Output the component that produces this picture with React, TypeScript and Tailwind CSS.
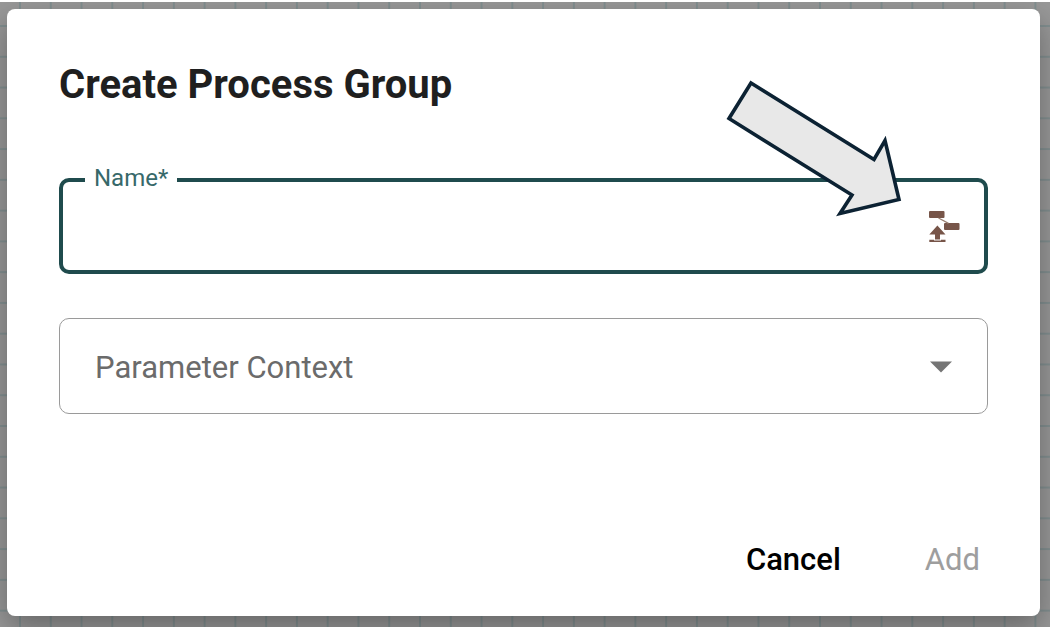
import { useState } from 'react';

function CanvasGrid() {
  return (
    <svg className="absolute inset-0 h-full w-full" aria-hidden="true">
      <defs>
        <pattern id="grid" x="19" y="23" width="30.77" height="30.77" patternUnits="userSpaceOnUse">
          <path d="M0 1H30.77M1 0V30.77" stroke="#828f90" strokeWidth="2" />
        </pattern>
      </defs>
      <rect width="100%" height="100%" fill="url(#grid)" />
    </svg>
  );
}

function ImportFlowIcon() {
  return (
    <svg className="size-8" viewBox="0 0 32 32" fill="#775549" aria-hidden="true">
      <rect x="1" y="1" width="15.5" height="7" rx="1" />
      <rect x="16" y="13" width="15.5" height="7" rx="1" />
      <path d="M10.5 8L20.5 13.4" stroke="#9a7f70" strokeWidth="1.2" />
      <path d="M9.400 15.500L17.500 24.500H12V29.500H7V24.500H1.300Z" />
      <path d="M1.300 29.700H6V30.500H13V29.700H17.500V32H1.300Z" />
    </svg>
  );
}

function PointerArrow() {
  return (
    <svg
      className="pointer-events-none absolute top-[68px] right-[140px] h-[150px] w-[190px]"
      viewBox="0 0 190 150"
      aria-hidden="true"
    >
      <path
        d="M31 13L154 89.500L165 70.500L179 129.500L120 143.500L132 125L9 48.500Z"
        fill="#e8e8e8"
        stroke="#0c2233"
        strokeWidth="3.6"
      />
    </svg>
  );
}

export default function App() {
  const [name, setName] = useState('');
  const [context, setContext] = useState('');

  return (
    <div className="min-h-screen bg-white pt-0.5 pb-px font-['Roboto',sans-serif]">
      <main className="relative flex min-h-[calc(100vh-3px)] overflow-hidden bg-[#989898] pt-[7px] pr-2.5 pb-[11px] pl-[7px]">
        <CanvasGrid />
        <form
          role="dialog"
          aria-labelledby="dialog-title"
          onSubmit={(event) => event.preventDefault()}
          className="relative flex grow flex-col rounded-lg bg-white px-[52px] pt-[52px] pb-9 shadow-[0_12px_30px_rgba(0,0,0,0.32)]"
        >
          <h1 id="dialog-title" className="text-[40px] leading-[48px] font-bold text-[#1f1f1f]">
            Create Process Group
          </h1>

          <fieldset className="mt-[55px] h-[110px] rounded-[10px] border-4 border-[#1f4b4d] px-[22px]">
            <legend className="px-[9px] pb-1 text-2xl leading-7 text-[#37696a]">
              <label htmlFor="group-name">Name*</label>
            </legend>
            <div className="flex h-[60px] items-center">
              <input
                id="group-name"
                type="text"
                required
                value={name}
                onChange={(event) => setName(event.target.value)}
                className="h-12 min-w-0 grow px-[9px] text-[31px] text-[#1f1f1f] outline-none"
              />
              <button type="button" aria-label="Import from file" className="mr-0.5">
                <ImportFlowIcon />
              </button>
            </div>
          </fieldset>

          <div className="mt-11 grid">
            <select
              aria-label="Parameter Context"
              value={context}
              onChange={(event) => setContext(event.target.value)}
              className="col-start-1 row-start-1 h-24 appearance-none rounded-[10px] border border-[#9a9a9a] bg-white px-[35px] pt-1 text-[31px] text-[#6b6b6b]"
            >
              <option value="">Parameter Context</option>
            </select>
            <svg
              className="pointer-events-none col-start-1 row-start-1 mt-0.5 mr-9 h-3 w-[22px] self-center justify-self-end"
              viewBox="0 0 22 12"
              aria-hidden="true"
            >
              <path d="M0 0.500H22L11 11.500Z" fill="#757575" />
            </svg>
          </div>

          <div className="mt-auto flex justify-end gap-14 text-[31px] leading-[40px]">
            <button type="button" className="px-3.5 font-medium text-black">
              Cancel
            </button>
            <button type="submit" disabled className="pr-2 pl-3.5 text-[#9e9e9e]">
              Add
            </button>
          </div>
        </form>
        <PointerArrow />
      </main>
    </div>
  );
}
